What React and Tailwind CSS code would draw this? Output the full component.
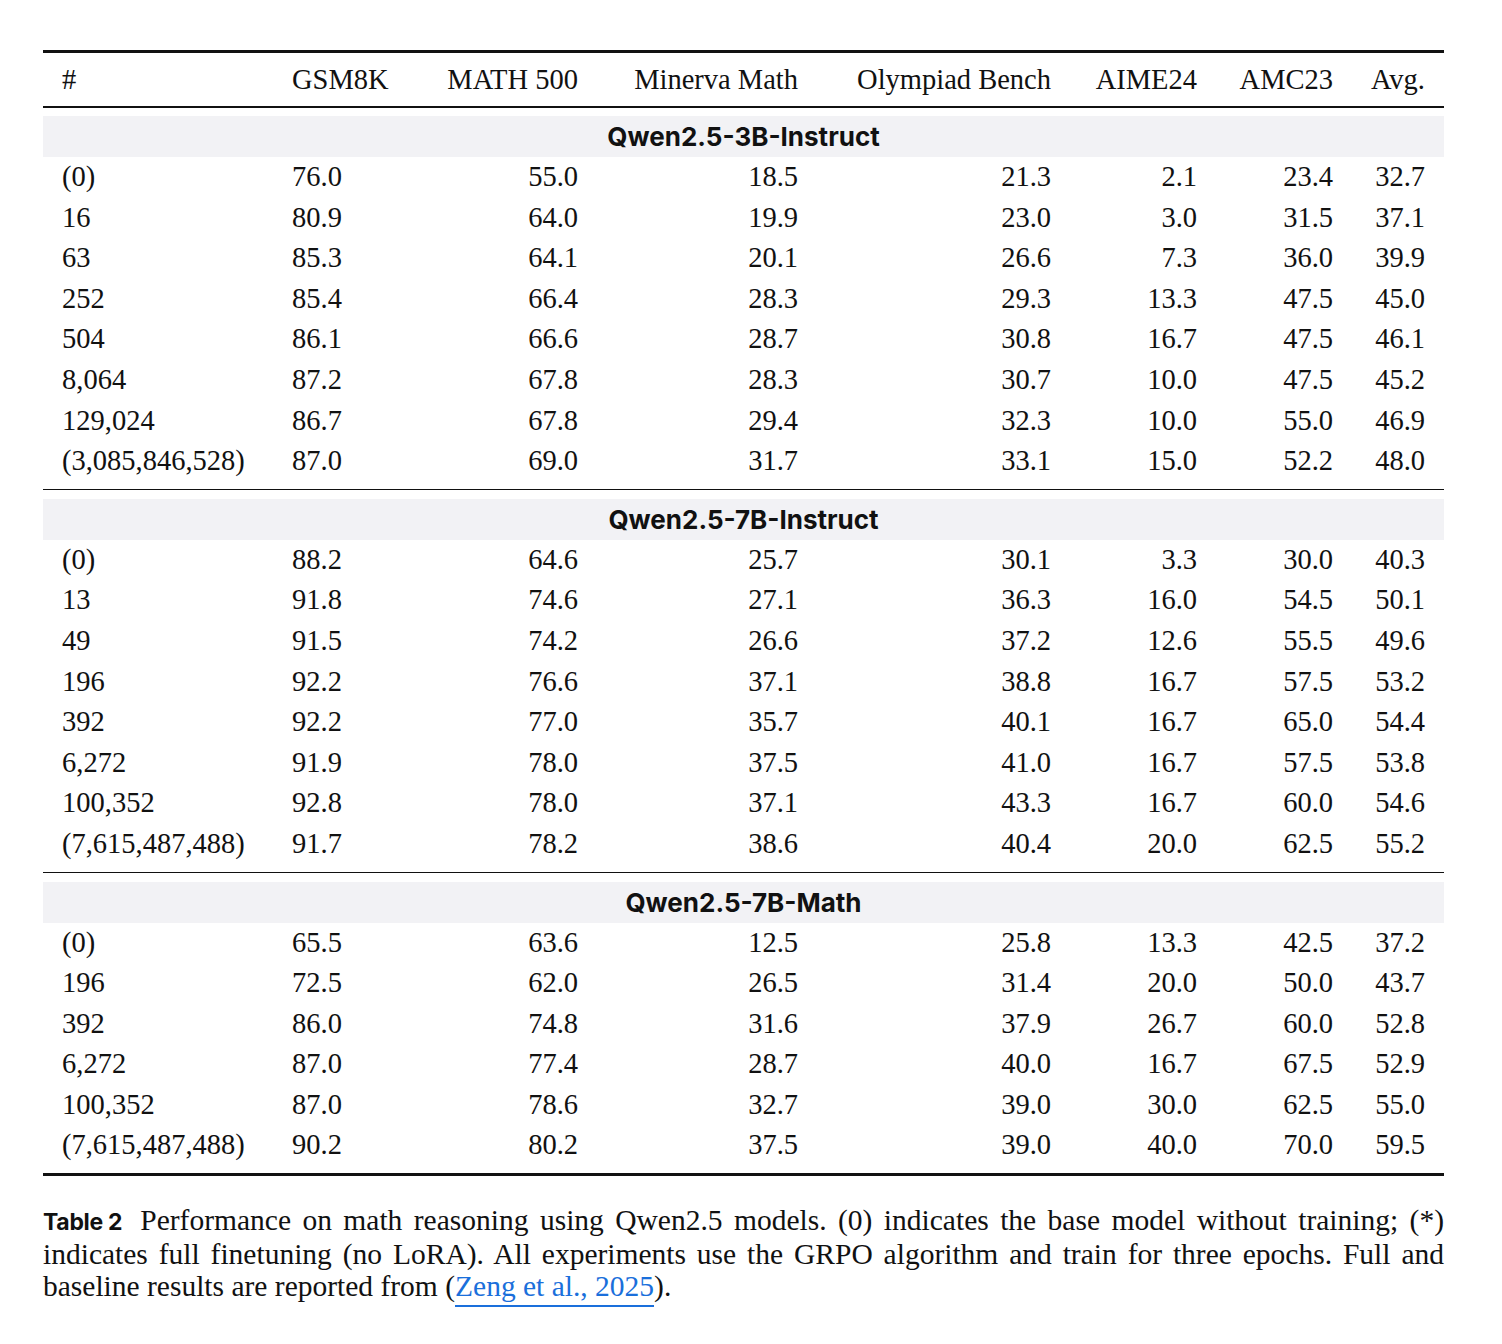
const COLS = ['#', 'GSM8K', 'MATH 500', 'Minerva Math', 'Olympiad Bench', 'AIME24', 'AMC23', 'Avg.'];

const SECTIONS = [
  {
    title: 'Qwen2.5-3B-Instruct',
    rows: [
      ['(0)', '76.0', '55.0', '18.5', '21.3', '2.1', '23.4', '32.7'],
      ['16', '80.9', '64.0', '19.9', '23.0', '3.0', '31.5', '37.1'],
      ['63', '85.3', '64.1', '20.1', '26.6', '7.3', '36.0', '39.9'],
      ['252', '85.4', '66.4', '28.3', '29.3', '13.3', '47.5', '45.0'],
      ['504', '86.1', '66.6', '28.7', '30.8', '16.7', '47.5', '46.1'],
      ['8,064', '87.2', '67.8', '28.3', '30.7', '10.0', '47.5', '45.2'],
      ['129,024', '86.7', '67.8', '29.4', '32.3', '10.0', '55.0', '46.9'],
      ['(3,085,846,528)', '87.0', '69.0', '31.7', '33.1', '15.0', '52.2', '48.0'],
    ],
  },
  {
    title: 'Qwen2.5-7B-Instruct',
    rows: [
      ['(0)', '88.2', '64.6', '25.7', '30.1', '3.3', '30.0', '40.3'],
      ['13', '91.8', '74.6', '27.1', '36.3', '16.0', '54.5', '50.1'],
      ['49', '91.5', '74.2', '26.6', '37.2', '12.6', '55.5', '49.6'],
      ['196', '92.2', '76.6', '37.1', '38.8', '16.7', '57.5', '53.2'],
      ['392', '92.2', '77.0', '35.7', '40.1', '16.7', '65.0', '54.4'],
      ['6,272', '91.9', '78.0', '37.5', '41.0', '16.7', '57.5', '53.8'],
      ['100,352', '92.8', '78.0', '37.1', '43.3', '16.7', '60.0', '54.6'],
      ['(7,615,487,488)', '91.7', '78.2', '38.6', '40.4', '20.0', '62.5', '55.2'],
    ],
  },
  {
    title: 'Qwen2.5-7B-Math',
    rows: [
      ['(0)', '65.5', '63.6', '12.5', '25.8', '13.3', '42.5', '37.2'],
      ['196', '72.5', '62.0', '26.5', '31.4', '20.0', '50.0', '43.7'],
      ['392', '86.0', '74.8', '31.6', '37.9', '26.7', '60.0', '52.8'],
      ['6,272', '87.0', '77.4', '28.7', '40.0', '16.7', '67.5', '52.9'],
      ['100,352', '87.0', '78.6', '32.7', '39.0', '30.0', '62.5', '55.0'],
      ['(7,615,487,488)', '90.2', '80.2', '37.5', '39.0', '40.0', '70.0', '59.5'],
    ],
  },
];

// column alignment: first two left, rest right
const cellCls = [
  'pl-[19px] text-left',
  'pl-[19px] text-left',
  'pr-[20px] text-right',
  'pr-[20px] text-right',
  'pr-[20px] text-right',
  'pr-[20px] text-right',
  'pr-[20px] text-right',
  'pr-[19px] text-right',
];

const GRID = 'grid grid-cols-[230px_144px_181px_220px_253px_146px_136px_91px]';

const Row = ({ cells, header = false }) => (
  <div className={`${GRID} ${header ? 'h-[53.5px] leading-[53.5px]' : 'h-[40.6px] leading-[40.6px]'}`}>
    {cells.map((c, i) => (
      <div key={i} className={`whitespace-nowrap ${cellCls[i]}`}>
        {c}
      </div>
    ))}
  </div>
);

const Section = ({ title, rows, last }) => (
  <>
    <div className="mt-[8.5px] h-[41px] bg-[#f2f2f5] flex items-center justify-center">
      <span className="font-['Inter',sans-serif] font-bold text-[26px] text-[#111]">
        {title}
      </span>
    </div>
    {rows.map((r, i) => (
      <Row key={i} cells={r} />
    ))}
    <div className={`mt-[7px] bg-[#111] ${last ? 'h-[2.5px]' : 'h-[1.5px]'}`} />
  </>
);

export default function App() {
  return (
    <div className="w-[1502px] min-h-[1344px] bg-white text-[#111]">
      <div className="ml-[43px] w-[1401px] pt-[50px] font-['Liberation_Serif',serif] text-[28.5px]">
        <div className="h-[2.5px] bg-[#111]" />
        <Row cells={COLS} header />
        <div className="h-[1.5px] bg-[#111]" />
        {SECTIONS.map((s, i) => (
          <Section key={s.title} {...s} last={i === SECTIONS.length - 1} />
        ))}

        <div className="mt-[28.5px] text-[29.5px] leading-[32px]">
          <div className="whitespace-nowrap text-justify [text-align-last:justify]">
            <span className="inline-block font-['Inter',sans-serif] font-bold text-[23px] tracking-[-0.3px]">Table 2</span>
            <span className="inline-block w-[18px]" />
            Performance on math reasoning using Qwen2.5 models. (0) indicates the base model without training; (*)
          </div>
          <div className="whitespace-nowrap text-justify [text-align-last:justify]">
            indicates full finetuning (no LoRA). All experiments use the GRPO algorithm and train for three epochs. Full and
          </div>
          <div className="whitespace-nowrap">
            baseline results are reported from (
            <span className="text-[#1a6fdb] border-b-2 border-[#1a6fdb] pb-[3px]">Zeng et al., 2025</span>
            ).
          </div>
        </div>
      </div>
    </div>
  );
}
